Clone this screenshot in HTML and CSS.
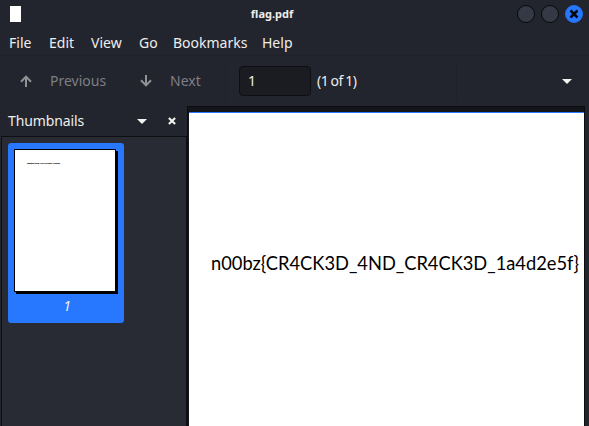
FILE: index.html
```html
<!DOCTYPE html>
<html lang="en">
<head>
<meta charset="utf-8">
<title>flag.pdf</title>
<link rel="stylesheet" href="styles.css">
</head>
<body>
<header class="titlebar">
  <span class="doc-icon"></span>
  <span class="title">flag.pdf</span>
  <div class="window-buttons">
    <span class="win-btn"></span>
    <span class="win-btn"></span>
    <span class="win-btn close"><svg width="10" height="10" viewBox="0 0 10 10"><path d="M1.5 1.5l7 7M8.5 1.5l-7 7" stroke="#05070d" stroke-width="2.5"/></svg></span>
  </div>
</header>
<nav class="menubar">
  <span class="m-file">File</span><span class="m-edit">Edit</span><span class="m-view">View</span><span class="m-go">Go</span><span class="m-book">Bookmarks</span><span>Help</span>
</nav>
<div class="toolbar">
  <div class="tool prev"><svg width="12" height="12" viewBox="0 0 12 12"><path d="M6 12V2M1 6.8L6 1.6l5 5.2" /></svg><span>Previous</span></div>
  <div class="tool next"><svg width="12" height="12" viewBox="0 0 12 12"><path d="M6 0v10M1 5.2l5 5.2 5-5.2" /></svg><span>Next</span></div>
  <div class="page-box">1</div>
  <span class="page-count">(1 of 1)</span>
  <div class="zoom-area"><svg width="10" height="5" viewBox="0 0 10 5"><path d="M0 0h10L5 5z" fill="#f2f2ee"/></svg></div>
</div>
<main class="content">
  <aside class="sidebar">
    <div class="side-head">
      <span class="side-title">Thumbnails</span>
      <svg class="caret" width="10" height="5" viewBox="0 0 10 5"><path d="M0 0h10L5 5z" fill="#f2f2ee"/></svg>
      <svg width="8" height="8" viewBox="0 0 8 8"><path d="M.9.9l6.2 6.2M7.1.9L.9 7.1" stroke="#f2f2ee" stroke-width="2.1"/></svg>
    </div>
    <div class="thumbs">
      <div class="thumb">
        <div class="thumb-page"><svg width="50" height="6"><text x="0" y="2.2" textLength="33" lengthAdjust="spacingAndGlyphs">n00bz{CR4CK3D_4ND_CR4CK3D_1a4d2e5f}</text></svg></div>
        <div class="thumb-label">1</div>
      </div>
    </div>
  </aside>
  <section class="viewer">
    <div class="page"><svg class="flag" width="372" height="28"><text x="0" y="20" textLength="368" lengthAdjust="spacingAndGlyphs">n00bz{CR4CK3D_4ND_CR4CK3D_1a4d2e5f}</text></svg></div>
  </section>
</main>
</body>
</html>
```
FILE: styles.css
```css
* { box-sizing: border-box; }
body {
  margin: 0;
  width: 589px;
  height: 426px;
  overflow: hidden;
  display: flex;
  flex-direction: column;
  background: #23252e;
  color: #eeeeec;
  font: 14px/20px "Noto Sans", sans-serif;
}
svg { display: block; flex: none; }
span { white-space: nowrap; }
.titlebar {
  display: grid;
  grid-template-columns: 78px 1fr 78px;
  align-items: center;
  height: 28px;
}
.doc-icon { width: 11px; height: 16px; margin-left: 10px; background: #fff; }
.title { padding-right: 45px; text-align: center; font-weight: 700; font-size: 11px; }
.window-buttons { display: flex; gap: 6px; margin-left: 6px; }
.win-btn {
  display: flex;
  align-items: center;
  justify-content: center;
  width: 18px;
  height: 18px;
  border: 1px solid #08090c;
  border-radius: 50%;
  background: #353945;
}
.close { background: #2777ff; border-color: #2470ee; }
.menubar { display: flex; gap: 16px; height: 27px; padding: 5px 0 0 9px; }
.m-file { width: 24px; }
.m-edit { width: 26px; }
.m-view { width: 32px; }
.m-go { width: 18px; }
.m-book { width: 73px; }
.toolbar {
  display: flex;
  align-items: center;
  height: 51px;
  border-top: 1px solid #20222a;
}
.tool { display: flex; align-items: center; color: #7e7f83; }
.tool svg { fill: none; stroke: #929295; stroke-width: 2; }
.prev { width: 120px; padding-left: 20px; gap: 18px; }
.next { width: 106px; height: 41px; padding-left: 20px; gap: 18px; border-right: 1px solid #20222a; }
.page-box {
  width: 72px;
  height: 30px;
  margin-left: 13px;
  padding: 4px 8px;
  border: 1px solid #0e0f13;
  border-radius: 4px;
  background: #1b1c22;
}
.page-count { width: 145px; padding-left: 6px; letter-spacing: -0.5px; word-spacing: -0.8px; }
.zoom-area {
  display: flex;
  align-items: center;
  justify-content: flex-end;
  flex: 1;
  height: 41px;
  padding-right: 17px;
  border-left: 1px solid #20222a;
}
.content { display: flex; flex: 1; }
.sidebar { display: flex; flex-direction: column; width: 187px; }
.side-head { display: flex; align-items: center; height: 30px; padding-left: 8px; }
.side-title { width: 129px; letter-spacing: -0.12px; }
.caret { margin-right: 21px; }
.thumbs {
  flex: 1;
  margin-left: 1px;
  padding: 6px;
  border: solid #0e0f13;
  border-width: 1px 1px 0;
  background: #282a34;
}
.thumb { width: 116px; height: 180px; padding: 6px; border-radius: 3px; background: #2777ff; }
.thumb-page {
  width: 102px;
  height: 143px;
  padding: 12px 0 0 12px;
  border: 1px solid #000;
  background: #fff;
  box-shadow: 2px 2px 0 #000;
  clip-path: polygon(0 0, 102px 0, 102px 2px, 104px 2px, 104px 145px, 2px 145px, 2px 143px, 0 143px);
  font: 2px Lato, sans-serif;
}
.thumb-page text { stroke: #000; stroke-width: 0.1px; }
.thumb-page svg { overflow: visible; }
.thumb-label { padding: 4px 0 0 2px; text-align: center; font-style: italic; }
.viewer {
  width: 398px;
  padding: 5px 0 0 1px;
  border: solid #0c0d10;
  border-width: 1px 1px 0;
  background: #14151a;
}
.page { height: 314px; padding: 137px 0 0 22px; border-top: 1px solid #2777ff; background: #fff; }
.flag { font: 19.5px Lato, sans-serif; }
```
